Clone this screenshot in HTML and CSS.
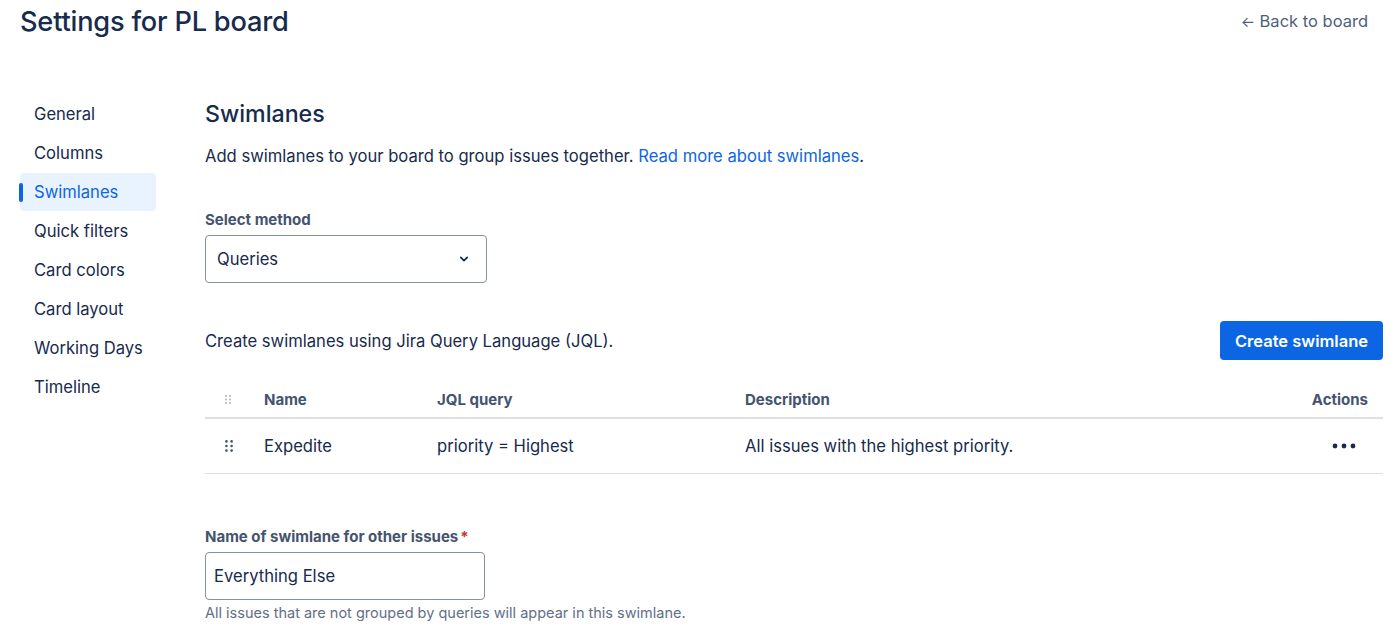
FILE: index.html
```html
<!DOCTYPE html>
<html lang="en">
<head>
<meta charset="utf-8">
<title>Settings for PL board</title>
<link rel="stylesheet" href="styles.css">
</head>
<body>
<div class="page">
  <header class="top">
    <h1 class="title">Settings for PL board</h1>
    <a class="back" href="#"><span class="arrow">←</span> Back to board</a>
  </header>
  <div class="layout">
    <nav class="side">
      <a class="nav-item" href="#">General</a>
      <a class="nav-item" href="#">Columns</a>
      <a class="nav-item active" href="#">Swimlanes</a>
      <a class="nav-item" href="#">Quick filters</a>
      <a class="nav-item" href="#">Card colors</a>
      <a class="nav-item" href="#">Card layout</a>
      <a class="nav-item" href="#">Working Days</a>
      <a class="nav-item" href="#">Timeline</a>
    </nav>
    <main class="main">
      <h2 class="heading">Swimlanes</h2>
      <p class="intro">Add swimlanes to your board to group issues together. <a class="link" href="#">Read more about swimlanes</a>.</p>

      <div class="field method">
        <label class="label">Select method</label>
        <div class="select">
          <span>Queries</span>
          <svg class="chev" width="12" height="12" viewBox="0 0 12 12"><path d="M2.8 4.4 6 7.6 9.2 4.4" fill="none" stroke="#172B4D" stroke-width="1.8" stroke-linecap="round" stroke-linejoin="round"/></svg>
        </div>
      </div>

      <div class="jql-bar">
        <p class="jql-text">Create swimlanes using Jira Query Language (JQL).</p>
        <button class="btn">Create swimlane</button>
      </div>

      <div class="table">
        <div class="row head">
          <div class="c-drag"><svg width="6" height="9" viewBox="0 0 6 9"><g fill="#A5ADBA"><circle cx="1" cy="1" r="0.9"/><circle cx="5" cy="1" r="0.9"/><circle cx="1" cy="4.5" r="0.9"/><circle cx="5" cy="4.5" r="0.9"/><circle cx="1" cy="8" r="0.9"/><circle cx="5" cy="8" r="0.9"/></g></svg></div>
          <div class="c-name">Name</div>
          <div class="c-jql">JQL query</div>
          <div class="c-desc">Description</div>
          <div class="c-act">Actions</div>
        </div>
        <div class="row body">
          <div class="c-drag"><svg width="8" height="12" viewBox="0 0 8 12"><g fill="#44546F"><circle cx="1.4" cy="1.4" r="1.3"/><circle cx="6.6" cy="1.4" r="1.3"/><circle cx="1.4" cy="6" r="1.3"/><circle cx="6.6" cy="6" r="1.3"/><circle cx="1.4" cy="10.6" r="1.3"/><circle cx="6.6" cy="10.6" r="1.3"/></g></svg></div>
          <div class="c-name">Expedite</div>
          <div class="c-jql">priority = Highest</div>
          <div class="c-desc">All issues with the highest priority.</div>
          <div class="c-act"><svg width="24" height="6" viewBox="0 0 24 6"><g fill="#172B4D"><circle cx="3" cy="3" r="2.4"/><circle cx="12" cy="3" r="2.4"/><circle cx="21" cy="3" r="2.4"/></g></svg></div>
        </div>
      </div>

      <div class="field other">
        <label class="label">Name of swimlane for other issues<span class="req">*</span></label>
        <div class="input">Everything Else</div>
        <p class="help">All issues that are not grouped by queries will appear in this swimlane.</p>
      </div>
    </main>
  </div>
</div>
</body>
</html>
```

FILE: styles.css
```css
* { box-sizing: border-box; }
html, body { margin: 0; padding: 0; background: #fff; }
body {
  font-family: Inter, "Noto Sans", "Liberation Sans", sans-serif;
  color: #172B4D;
  font-size: 16.6px;
}
a { text-decoration: none; }
.page { padding: 0 17px 0 20px; }
.top {
  display: flex;
  justify-content: space-between;
  align-items: center;
  height: 42px;
}
.title {
  margin: 0;
  font-size: 27.2px;
  font-weight: 500;
  letter-spacing: -0.2px;
  color: #172B4D;
}
.back {
  color: #505F79;
  font-size: 16.5px;
  margin-right: 15px;
}
.arrow { font-size: 15px; }
.layout {
  display: flex;
  margin-top: 53px;
}
.side {
  width: 136px;
  display: flex;
  flex-direction: column;
  gap: 1px;
  flex-shrink: 0;
}
.nav-item {
  position: relative;
  display: block;
  height: 38px;
  line-height: 38px;
  padding-left: 14px;
  color: #172B4D;
  border-radius: 4px;
}
.nav-item.active {
  background: #E9F2FF;
  color: #0C66E4;
}
.nav-item.active::before {
  content: "";
  position: absolute;
  left: -1px;
  top: 10px;
  width: 4px;
  height: 19px;
  border-radius: 2px;
  background: #0C66E4;
}
.main {
  flex: 1;
  margin-left: 49px;
}
.heading {
  margin: 0;
  font-size: 23.2px;
  font-weight: 500;
  line-height: 38px;
}
.intro {
  margin: 11px 0 0;
  line-height: 24px;
}
.link { color: #0C66E4; }
.field.method { margin-top: 42px; }
.label {
  display: block;
  font-size: 15px;
  font-weight: 700;
  color: #44546F;
  line-height: 20px;
}
.req { color: #C9372C; margin-left: 2px; }
.select {
  margin-top: 5px;
  width: 282px;
  height: 48px;
  border: 1px solid #8590A2;
  border-radius: 4px;
  display: flex;
  align-items: center;
  justify-content: space-between;
  padding: 0 16px 0 11px;
}
.jql-bar {
  margin-top: 38px;
  display: flex;
  justify-content: space-between;
  align-items: center;
}
.jql-text { margin: 0; }
.btn {
  font-family: inherit;
  font-size: 16.5px;
  font-weight: 600;
  color: #fff;
  background: #0C66E4;
  border: none;
  border-radius: 4px;
  height: 39px;
  padding: 0 15px;
}
.table { margin-top: 21px; }
.row {
  display: grid;
  grid-template-columns: 59px 173px 308px 1fr 120px;
  align-items: center;
}
.row.head {
  height: 38px;
  border-bottom: 2px solid #DCDFE4;
  font-size: 15px;
  font-weight: 700;
  color: #44546F;
}
.row.body {
  height: 55px;
  border-bottom: 1px solid #DCDFE4;
}
.c-drag { padding-left: 20px; display: flex; align-items: center; }
.c-act { text-align: right; padding-right: 15px; }
.row.body .c-act { padding-right: 27px; display: flex; justify-content: flex-end; }
.field.other { margin-top: 53px; }
.input {
  margin-top: 5px;
  width: 280px;
  height: 48px;
  border: 1px solid #8590A2;
  border-radius: 4px;
  padding: 0 8px;
  line-height: 46px;
}
.help {
  margin: 4px 0 0;
  font-size: 14.5px;
  color: #626F86;
}
```
